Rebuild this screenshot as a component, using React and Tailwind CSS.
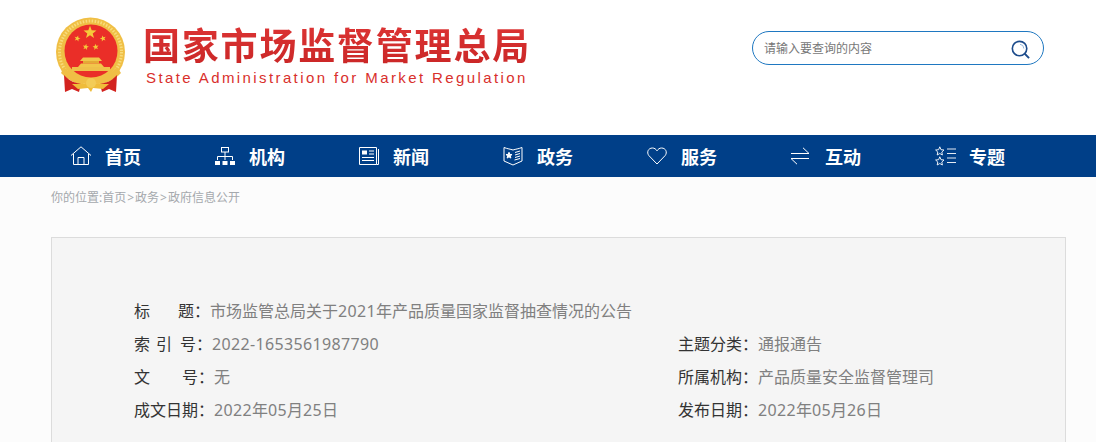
const CJK = '"Noto Sans CJK SC", "Microsoft YaHei", sans-serif';
const BODY = '"Noto Sans", "Noto Sans CJK SC", sans-serif';

function Star({ cx, cy, r, fill = '#f7d33c', rot = 0 }) {
  const pts = [];
  for (let i = 0; i < 10; i++) {
    const rad = i % 2 === 0 ? r : r * 0.42;
    const a = (-90 + rot + i * 36) * Math.PI / 180;
    pts.push(`${(cx + rad * Math.cos(a)).toFixed(2)},${(cy + rad * Math.sin(a)).toFixed(2)}`);
  }
  return <polygon points={pts.join(' ')} fill={fill} />;
}

function Emblem() {
  return (
    <svg width="72" height="76" viewBox="0 0 72 76" className="block">
      <circle cx="35.5" cy="35" r="34.5" fill="#f0bf45" />
      <circle cx="35.5" cy="35" r="31" fill="none" stroke="#f8dc7c" strokeWidth="3" strokeDasharray="1.5 1.5" />
      <circle cx="36" cy="34" r="26.5" fill="#ea2e28" />
      <Star cx={35} cy={15.5} r={6.8} fill="#f5c93a" />
      <Star cx={22.3} cy={21.5} r={3.2} rot={15} fill="#f5c93a" />
      <Star cx={48} cy={21.5} r={3.2} rot={-15} fill="#f5c93a" />
      <Star cx={30.7} cy={30} r={3.2} rot={10} fill="#f5c93a" />
      <Star cx={40.7} cy={30} r={3.2} rot={-10} fill="#f5c93a" />
      <path d="M25 44 L47 44 L44 40.5 L28 40.5 Z" fill="#f2c64b" />
      <rect x="28" y="44" width="16" height="2.5" fill="#e4aa35" />
      <path d="M23 50 L49 50 L46 46.5 L26 46.5 Z" fill="#f2c64b" />
      <rect x="17" y="50" width="38" height="4" fill="#efc04a" />
      <path d="M9 50 C18 60 28 61 36 61 C44 61 54 60 62 50 L66 56 C58 65 47 67 36 67 C25 67 14 65 6 56 Z" fill="#f0bf45" />
      <path d="M11 60 L9 58 L10 75 L17 72 L24 75 L26 67 C20 66 15 64 11 60 Z" fill="#d3231f" />
      <path d="M60 60 L62 58 L61 75 L54 72 L47 75 L45 67 C51 66 56 64 60 60 Z" fill="#d3231f" />
      <path d="M17 67 L54 67 L48 72 L38 71 L36 75 L33 71 L23 72 Z" fill="#efbc3a" />
      <circle cx="36" cy="66" r="5" fill="#f3cc57" />
    </svg>
  );
}

const strokeProps = { fill: 'none', stroke: '#fff', strokeWidth: 1 };

const HomeIcon = () => (
  <svg width="22" height="20" viewBox="1 0 22 20" {...strokeProps}>
    <path d="M1 9.5 L11 .8 L21 9.5" />
    <path d="M3.5 8 V18.5 H18.5 V8" />
    <path d="M8 18.5 V11.5 H14 V18.5" />
  </svg>
);
const OrgIcon = () => (
  <svg width="20" height="20" viewBox="0 0 20 20" {...strokeProps}>
    <rect x="6.5" y="1.5" width="7" height="4.5" />
    <path d="M10 6 V10.5 M2.5 14 V10.5 H17.5 V14 M10 10.5 V14" />
    <rect x="0" y="15" width="5" height="4" fill="#fff" stroke="none" />
    <rect x="7.5" y="15" width="5" height="4" fill="#fff" stroke="none" />
    <rect x="15" y="15" width="5" height="4" fill="#fff" stroke="none" />
  </svg>
);
const NewsIcon = () => (
  <svg width="20" height="18" viewBox="0 0 20 18" {...strokeProps}>
    <path d="M.5 .5 H17.5 V17.5 H.5 Z" />
    <path d="M19.5 2 V17.5 H17.5" />
    <rect x="3" y="3.5" width="5" height="4" fill="#fff" stroke="none" />
    <path d="M10 4 H15 M10 7 H15 M3 10.5 H15 M3 13.5 H15" />
  </svg>
);
const AffairIcon = () => (
  <svg width="20" height="20" viewBox="0 0 20 20" {...strokeProps}>
    <path d="M1 1.5 C5 3 7 3 10 4 C13 3 15 3 19 1.5 V15 L10 19 L1 15 Z" />
    <path d="M12 6.5 L17 5 M12 9 L17 7.5 M12 11.5 L17 10 M11.5 14 L17 12.5" />
    <Star cx={6} cy={9.5} r={3.2} fill="#fff" />
  </svg>
);
const HeartIcon = () => (
  <svg width="20" height="18" viewBox="0 0 20 18" {...strokeProps}>
    <path d="M10 17 L1.8 8.5 C-.5 5.5 1 1 5.5 1 C7.5 1 9 2.2 10 3.8 C11 2.2 12.5 1 14.5 1 C19 1 20.5 5.5 18.2 8.5 Z" />
  </svg>
);
const SwapIcon = () => (
  <svg width="18" height="18" viewBox="0 0 18 18" {...strokeProps}>
    <path d="M0 6.5 H18 L12 .8" />
    <path d="M18 11.5 H0 L6 17.2" />
  </svg>
);
const TopicIcon = () => (
  <svg width="22" height="20" viewBox="0 0 22 20" fill="none" stroke="#fff" strokeWidth="0.9">
    <path d="M4.8 .8 L6 3.7 L9 4 L6.8 6 L7.4 9 L4.8 7.5 L2.2 9 L2.8 6 L.6 4 L3.6 3.7 Z" />
    <path d="M4.8 10.8 L6 13.7 L9 14 L6.8 16 L7.4 19 L4.8 17.5 L2.2 19 L2.8 16 L.6 14 L3.6 13.7 Z" />
    <path d="M12 3 H21 M12 7.5 H21 M12 12 H21 M12 16.5 H21" />
  </svg>
);

const SearchIcon = () => (
  <svg width="19" height="19" viewBox="0 0 20 20" fill="none" className="mt-[2px]">
    <circle cx="9" cy="9" r="7.6" stroke="#1c4b8b" strokeWidth="1.7" />
    <path d="M14.5 14.5 L19 19" stroke="#1c4b8b" strokeWidth="2" />
    <path d="M9.5 4.5 A4.5 4.5 0 0 1 13.5 9" stroke="#8fb3d9" strokeWidth="1" />
  </svg>
);

const NAV = [
  ['首页', HomeIcon],
  ['机构', OrgIcon],
  ['新闻', NewsIcon],
  ['政务', AffairIcon],
  ['服务', HeartIcon],
  ['互动', SwapIcon],
  ['专题', TopicIcon],
];

function Digits({ text }) {
  return text.split(/([0-9-]+)/).map((part, i) =>
    /^[0-9-]+$/.test(part)
      ? <span key={i} className="tracking-[0.35px]">{part}</span>
      : <span key={i}>{part}</span>
  );
}

function Row({ label, value }) {
  return (
    <div className="flex h-[33px] items-center text-[16px] leading-[33px]">
      <span className="flex whitespace-pre text-[#333]">{label}<span>：</span></span>
      <span className="whitespace-pre text-[#808080]"><Digits text={value} /></span>
    </div>
  );
}

export default function App() {
  return (
    <div className="h-[442px] w-[1096px] overflow-hidden bg-[#fcfcfc]" style={{ fontFamily: BODY }}>
      <header className="flex h-[135px] bg-white pl-[55px] pt-[17px]">
        <Emblem />
        <div className="ml-[16px] mt-[3px] w-[400px]">
          <div
            className="whitespace-nowrap bg-gradient-to-b from-[#de3535] to-[#c92626] bg-clip-text text-[37px] font-bold leading-[48px] tracking-[1.8px] text-transparent"
            style={{ fontFamily: CJK }}
          >
            国家市场监督管理总局
          </div>
          <div
            className="ml-[3px] whitespace-nowrap text-[15px] leading-[20px] tracking-[2.4px] text-[#d9302c]"
            style={{ fontFamily: '"Liberation Sans", sans-serif' }}
          >
            State Administration for Market Regulation
          </div>
        </div>
        <div className="ml-[209px] mt-[14px] flex h-[34px] w-[292px] items-center justify-between rounded-[17px] border border-[#1f78c1] pl-[11px] pr-[13px]">
          <span className="pt-[1px] text-[12px] text-[#777]">请输入要查询的内容</span>
          <SearchIcon />
        </div>
      </header>

      <nav className="flex h-[42px] bg-[#003f88] pl-[71px]">
        {NAV.map(([label, Icon]) => (
          <div key={label} className="flex w-[144px] items-center">
            <div className="flex w-[34px] items-center">
              <Icon />
            </div>
            <span className="text-[18px] font-bold text-white" style={{ fontFamily: CJK }}>{label}</span>
          </div>
        ))}
      </nav>

      <div className="flex pl-[51px] pt-[12px] text-[12px] leading-[18px] text-[#a5a9ad]">
        <span>你的位置:首页</span><span className="mx-[1px]">&gt;</span><span>政务</span><span className="mx-[1px]">&gt;</span><span>政府信息公开</span>
      </div>

      <section className="ml-[51px] mt-[30px] h-[300px] w-[1015px] border border-[#dcdcdc] bg-[#f5f5f5] pl-[82px] pt-[57px]">
        <Row label={<><span>标</span><span className="ml-[28px]">题</span></>} value="市场监管总局关于2021年产品质量国家监督抽查情况的公告" />
        <div className="flex">
          <div className="w-[544px]">
            <Row label={<><span>索</span><span className="ml-[6px]">引</span><span className="ml-[8px]">号</span></>} value="2022-1653561987790" />
            <Row label={<><span>文</span><span className="ml-[32px]">号</span></>} value="无" />
            <Row label="成文日期" value="2022年05月25日" />
          </div>
          <div>
            <Row label="主题分类" value="通报通告" />
            <Row label="所属机构" value="产品质量安全监督管理司" />
            <Row label="发布日期" value="2022年05月26日" />
          </div>
        </div>
      </section>
    </div>
  );
}
